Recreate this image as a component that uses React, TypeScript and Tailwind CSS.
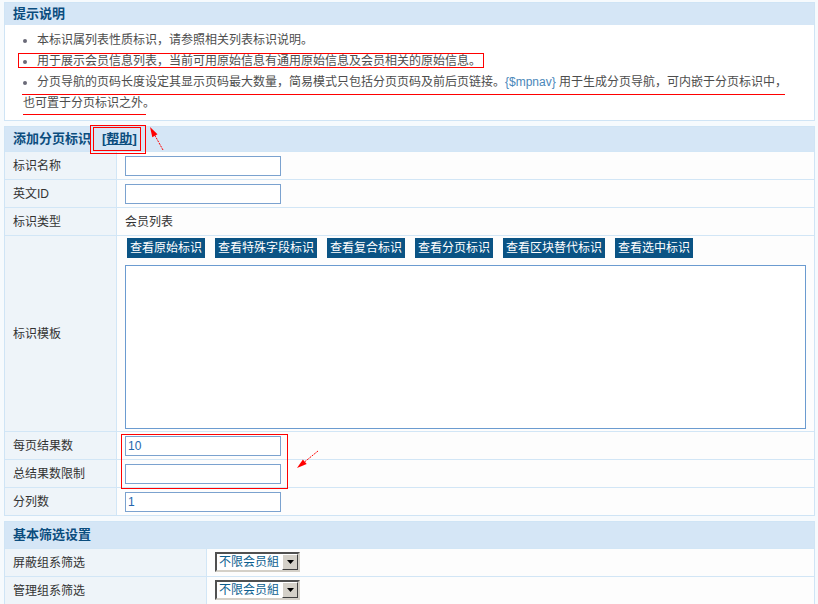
import type { ReactNode } from "react";

const tips: ReactNode[] = [
  "本标识属列表性质标识，请参照相关列表标识说明。",
  "用于展示会员信息列表，当前可用原始信息有通用原始信息及会员相关的原始信息。",
  <>
    分页导航的页码长度设定其显示页码最大数量，简易模式只包括分页页码及前后页链接。
    <span className="text-[#4b87b9]">{"{$mpnav}"}</span> 用于生成分页导航，可内嵌于分页标识中，
    <br />
    也可置于分页标识之外。
  </>,
];

const viewButtons = [
  "查看原始标识",
  "查看特殊字段标识",
  "查看复合标识",
  "查看分页标识",
  "查看区块替代标识",
  "查看选中标识",
];

function Header({ children, h }: { children: ReactNode; h: string }) {
  return (
    <div className={`${h} flex items-center bg-[#d5e6f6] pl-[8px] text-[13px] font-bold text-[#0b4d7e]`}>
      {children}
    </div>
  );
}

function Row({ label, wide, children }: { label: string; wide?: boolean; children: ReactNode }) {
  return (
    <div className="flex border-t border-[#d2e6f6]">
      <div
        className={`${wide ? "w-[202px]" : "w-[112px]"} flex shrink-0 items-center border-r border-[#d2e6f6] bg-[#eef4f9] pl-[8px] text-[#333]`}
      >
        {label}
      </div>
      <div className="flex min-h-[27px] flex-1 items-center bg-[#fdfdfd] pl-[8px]">{children}</div>
    </div>
  );
}

function TextInput({ value = "" }: { value?: string }) {
  return (
    <input
      readOnly
      value={value}
      className="h-[20px] w-[156px] border border-[#7ba2cf] bg-white px-[2px] text-[12px] text-[#2466ad] outline-none"
    />
  );
}

function GroupSelect() {
  return (
    <div className="mb-[2px] flex h-[20px] w-[85px] border-2 border-t-[#505050] border-l-[#505050] border-b-[#d4d0c8] border-r-[#d4d0c8] bg-white">
      <span className="flex-1 pl-[2px] leading-[16px] text-[#0b5e8f]">不限会员組</span>
      <span className="flex w-[16px] items-center justify-center border border-t-white border-l-white border-b-[#404040] border-r-[#404040] bg-[#d4d0c8]">
        <svg width="7" height="4" viewBox="0 0 7 4">
          <path d="M0 0h7L3.5 4z" fill="#000" />
        </svg>
      </span>
    </div>
  );
}

export default function App() {
  return (
    <div className="relative h-[604px] w-[818px] overflow-hidden bg-[#f6fafd] pl-[4px] pr-[3px] pt-[2px] font-['Liberation_Sans','Noto_Sans_CJK_SC',sans-serif] text-[12px] text-[#333]">
      {/* 提示说明 */}
      <section className="border border-[#cfe4f5] bg-white">
        <Header h="h-[22px]">提示说明</Header>
        <ul className="pb-[6px] pl-[18px] pt-[5px] leading-[21px] text-[#4d4d4d]">
          {tips.map((t, i) => (
            <li key={i}>
              <span className="mr-[10px] inline-block h-[4px] w-[4px] rounded-full bg-[#6a6a78] align-middle" />
              {t}
            </li>
          ))}
        </ul>
      </section>

      {/* 添加分页标识 */}
      <section className="mt-[5px] border border-[#cfe4f5]">
        <Header h="h-[24px]">
          添加分页标识
          <span className="ml-[11px]">
            [<span className="underline">帮助</span>]
          </span>
        </Header>
        <Row label="标识名称">
          <TextInput />
        </Row>
        <Row label="英文ID">
          <TextInput />
        </Row>
        <Row label="标识类型">会员列表</Row>
        <Row label="标识模板">
          <div className="flex flex-col py-[2px]">
            <div className="flex gap-[10px] pl-[2px]">
              {viewButtons.map((b) => (
                <span key={b} className="h-[20px] bg-[#0a5384] px-[3px] leading-[20px] text-white">
                  {b}
                </span>
              ))}
            </div>
            <textarea
              readOnly
              className="mt-[7px] block h-[164px] w-[681px] resize-none border border-[#6b9bd0] bg-white outline-none"
            />
          </div>
        </Row>
        <Row label="每页结果数">
          <TextInput value="10" />
        </Row>
        <Row label="总结果数限制">
          <TextInput />
        </Row>
        <Row label="分列数">
          <TextInput value="1" />
        </Row>
      </section>

      {/* 基本筛选设置 */}
      <section className="mt-[5px] border border-[#cfe4f5]">
        <Header h="h-[26px]">基本筛选设置</Header>
        <Row label="屏蔽组系筛选" wide>
          <GroupSelect />
        </Row>
        <Row label="管理组系筛选" wide>
          <GroupSelect />
        </Row>
      </section>

      {/* red pen marks */}
      <svg
        className="pointer-events-none absolute left-0 top-0"
        width="818"
        height="604"
        viewBox="0 0 818 604"
        shapeRendering="crispEdges"
      >
        <g fill="none" stroke="#f00" strokeWidth="1">
          <rect x="18.5" y="53.5" width="465" height="14" />
          <line x1="22" y1="94.5" x2="785" y2="94.5" />
          <line x1="23" y1="114.5" x2="146" y2="114.5" />
          <rect x="90.5" y="125.5" width="55" height="28" />
          <rect x="93.5" y="127.5" width="47" height="23" />
          <rect x="121.5" y="434.5" width="166" height="54" />
        </g>
        <g shapeRendering="auto">
          <line x1="163" y1="150" x2="153" y2="132" stroke="#f00" strokeWidth="1" strokeDasharray="2 1" />
          <polygon points="150,127 157.5,134.2 152.3,137.2" fill="#f00" />
          <line x1="318" y1="451" x2="302" y2="464" stroke="#f00" strokeWidth="1" strokeDasharray="2 1" />
          <polygon points="297,468 306.7,464 302.9,459.4" fill="#f00" />
        </g>
      </svg>
    </div>
  );
}
